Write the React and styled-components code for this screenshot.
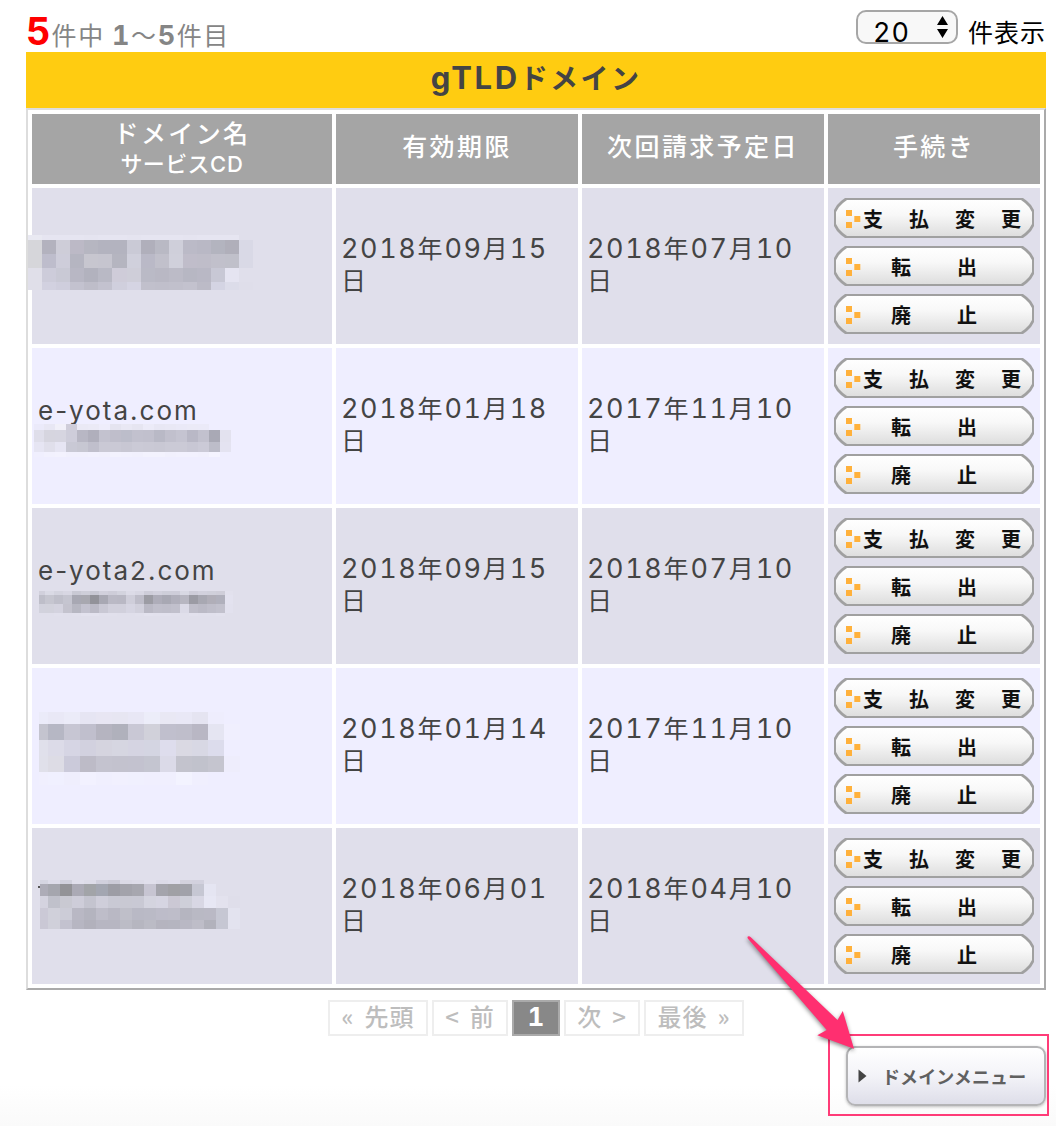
import React from "react";
import styled, { createGlobalStyle } from "styled-components";

const GlobalStyle = createGlobalStyle`
  * { box-sizing: border-box; }
  body {
    margin: 0;
    background: #fff;
    color: #444;
    font-family: "Noto Sans CJK JP", "Liberation Sans", sans-serif;
  }
`;

const Page = styled.div`
  position: relative;
  width: 1056px;
  height: 1126px;
  overflow: hidden;
  padding: 10px 10px 0 26px;
  background: linear-gradient(#fff 1085px, #fafafa 1126px);
`;

const TopBar = styled.div`
  display: flex;
  justify-content: space-between;
  width: 1020px;
  height: 42px;
`;

const Latin = styled.span`
  font-family: Inter, "Liberation Sans", sans-serif;
  font-feature-settings: "tnum" ${(p) => (p.$plain ? 0 : 1)};
  font-size: ${(p) => p.$size || 27}px;
  font-weight: ${(p) => p.$weight || 400};
  letter-spacing: ${(p) => p.$gap ?? 1.6}px;
  line-height: 1;
`;

const Count = styled.div`
  height: 42px;
  line-height: 42px;
  padding-top: 2px;
  font-size: 25px;
  letter-spacing: 1.6px;
  color: #858585;
  white-space: pre;
`;

const Total = styled(Latin)`
  color: #f00;
`;

const PerPage = styled.div`
  display: flex;
  align-items: flex-start;
  gap: 10px;
  font-size: 25px;
  letter-spacing: 1px;
  color: #000;
`;

const PerPageLabel = styled.span`
  height: 42px;
  line-height: 43px;
`;

const SelectBox = styled.div`
  display: flex;
  justify-content: space-between;
  width: 102px;
  height: 34px;
  padding: 4px 8px 0 15px;
  border: 2px solid #a6a6a6;
  border-radius: 10px;
  background: #f8f8f8;
`;

const SelectValue = styled(Latin)`
  line-height: 33px;
`;

const Title = styled.h1`
  width: 1020px;
  height: 56px;
  margin: 0;
  background: #ffcc11;
  font-size: 28px;
  font-weight: 700;
  letter-spacing: 2.4px;
  line-height: 51px;
  text-align: center;
`;

const Table = styled.table`
  width: 1020px;
  height: 882px;
  table-layout: fixed;
  border-collapse: separate;
  border-spacing: 4px;
  border: 2px solid #ddd;
  border-right-color: #aaa;
  border-bottom-color: #aaa;
`;

const HeadCell = styled.th`
  width: ${(p) => p.$width}px;
  height: 70px;
  padding: 0 0 ${(p) => (p.$double ? 7 : 9)}px;
  background: #a5a5a5;
  color: #fff;
  font-size: 25px;
  font-weight: 500;
  letter-spacing: 2.4px;
  line-height: 32px;
`;

const HeadNote = styled.div`
  font-size: 22px;
  letter-spacing: 0.4px;
  line-height: 28px;
`;

const Row = styled.tr`
  background: ${(p) => (p.$alt ? "#efeeff" : "#e0dfeb")};
`;

const Cell = styled.td`
  position: relative;
  height: 156px;
  padding: 0 6px 7px 5px;
  font-size: 25px;
  letter-spacing: 2px;
  line-height: 32px;
  vertical-align: middle;
`;

const DomainName = styled.div`
  height: 64px;
  padding: 2px 0 0 1px;
`;

const ActionCell = styled(Cell)`
  padding: 0 6px;
`;

const Actions = styled.div`
  display: flex;
  flex-direction: column;
  gap: 8px;
`;

const octagon =
  "polygon(0 12px, 3px 7px, 7px 3px, 11px 0, calc(100% - 11px) 0, calc(100% - 7px) 3px, calc(100% - 3px) 7px, 100% 12px, 100% calc(100% - 12px), calc(100% - 3px) calc(100% - 7px), calc(100% - 7px) calc(100% - 3px), calc(100% - 11px) 100%, 11px 100%, 7px calc(100% - 3px), 3px calc(100% - 7px), 0 calc(100% - 12px))";

const ActionButton = styled.button`
  position: relative;
  z-index: 0;
  display: flex;
  align-items: center;
  width: 200px;
  height: 40px;
  padding: 2px 0 0 12px;
  border: 0;
  background: #a0a0a0;
  clip-path: ${octagon};

  &::before {
    content: "";
    position: absolute;
    z-index: -1;
    inset: 2px;
    background: linear-gradient(#fff, #f8f8f8 40%, #dedede);
    clip-path: ${octagon};
  }

  svg {
    flex: none;
  }
`;

const ActionLabel = styled.span`
  width: 0;
  margin-left: ${(p) => (p.$wide ? 2 : 30)}px;
  color: #111;
  font-family: "Noto Sans CJK JP", sans-serif;
  font-size: 20px;
  font-weight: 700;
  letter-spacing: ${(p) => (p.$wide ? 26 : 46)}px;
  line-height: 36px;
  white-space: nowrap;
`;

const MosaicBox = styled.div`
  position: absolute;
  left: ${(p) => p.$x}px;
  top: ${(p) => p.$y}px;
`;

const MosaicRow = styled.div`
  display: flex;
  height: ${(p) => p.$height}px;
`;

const Tile = styled.i`
  flex: none;
  width: ${(p) => p.$width}px;
  background: #${(p) => p.$color};
`;

const Speck = styled.i`
  position: absolute;
  left: 6px;
  top: 58px;
  width: 2px;
  height: 2px;
  background: #555;
`;

const Pager = styled.nav`
  display: flex;
  justify-content: center;
  gap: 4px;
  width: 1020px;
  margin-top: 10px;
`;

const PageLink = styled.span`
  display: flex;
  align-items: center;
  justify-content: center;
  gap: 10px;
  width: ${(p) => p.$width}px;
  height: 36px;
  padding: 0 0 ${(p) => (p.$current ? 2 : 4)}px 0;
  border: 2px solid ${(p) => (p.$current ? "#aaa" : "#eee")};
  background: ${(p) => (p.$current ? "#888" : "#fff")};
  color: ${(p) => (p.$current ? "#fff" : "#bdbdbd")};
  font-size: 24px;
  font-weight: 500;
  letter-spacing: 1px;
  line-height: 30px;
`;

const Footer = styled.div`
  display: flex;
  justify-content: flex-end;
  width: 1020px;
  margin-top: 10px;
`;

const MenuButton = styled.button`
  display: flex;
  align-items: center;
  gap: 15px;
  width: 200px;
  height: 60px;
  padding: 0 0 0 10px;
  border: 2px solid #b4b4b6;
  border-radius: 9px;
  background: linear-gradient(#fff, #f3f3f8 50%, #dedee9);
  box-shadow: 0 1px 3px rgba(0, 0, 0, 0.25);
  color: #606060;
  font-family: "Noto Sans CJK JP", sans-serif;
  font-size: 18px;
  font-weight: 700;
  letter-spacing: 0.1px;
  white-space: nowrap;
`;

const Highlight = styled.div`
  position: absolute;
  left: 828px;
  top: 1034px;
  width: 221px;
  height: 82px;
  border: 2px solid #ff3c78;
`;

const Arrow = styled.svg`
  position: absolute;
  left: 738px;
  top: 926px;
  filter: drop-shadow(0 2px 2px rgba(0, 0, 0, 0.45));
`;

/* Each mosaic: origin inside the cell, column widths, then [height, colours] per row. */
const fill = (first, width, n, last) =>
  Array.from({ length: n }, (_, i) => (i === 0 ? first : i === n - 1 && last ? last : width));

const MOSAICS = [
  {
    x: -4, y: 47, widths: fill(14, 14.1, 16),
    rows: [
      [4.7, "e9e9f2 e6e5f1 e6e5f1 e6e5f1 e5e4f0 e6e5f1 e6e5f1 e5e4f0 e6e5f1 e6e5f1 e6e5f1 e5e4f0 e6e5f1 e6e5f1 e6e5f1 e0dfeb"],
      [14, "d6d6da b3b2be cecdd8 bcb9c6 b6b6c1 b3b3bf b3b3bf cacad6 b0afbb b9b9c4 cfcfda bbbac7 b9b8c5 b3b4bf b0afba d9d9e6"],
      [14, "d6d6da bebdcc cecdda b5b5c1 c7c6cf c6c5cf b5b5c0 d0d0dc bab9c7 c1c0cb d0d0db c0bdca bfbdc9 c1c0cb c0c0ca d9d9e6"],
      [14, "e0dfe9 cdccda c9c9d5 b8b7c4 b2b2be b9b9c5 cfccd9 cfced9 babac6 b9b8c4 bcbbc7 b7b7c3 b9b8c5 c8c8d5 e5e4f1 e0dfeb"],
      [8.3, "e0dfe9 d2d1e0 cfcedd c3c2cf bebdc9 c3c2cf d0cfdd d5d4e3 c1c0cc c0bfcb c1c0cc c3c2ce bcbbc7 d4d4e3 dcdce9 dfdeea"],
    ],
  },
  {
    x: 2, y: 76, widths: fill(10, 11, 18),
    rows: [
      [6, "ebeafa e8e7f4 f1f0f9 cfcdda eae9f5 ebeaf6 eeedfb e5e4f0 e9e8f4 e6e5f1 ecebf8 e8e7f4 e9e8f5 eae9f7 ebeaf7 ebeaf8 efeeff efeeff"],
      [11.5, "dfdeea d6d5df d6d5e0 cecdda b8b7c4 b0afbc c3c2cf bfbecb bcbdca c2c1ce c1c0cd b9b9c6 c1c0cd c5c4d1 b9b8c6 c2c1ce a9a9b5 e3e2ef"],
      [10.5, "e6e5f3 e0dfeb e6e5f3 c9c9d5 c7c7d2 c0bfcc cac9d5 cac9d5 c8c7d3 cbcad6 cac9d5 c9c8d4 cbcad6 cbcad6 c8c7d4 cbcad7 bdbdc9 e4e3f1"],
      [4.7, "f0effe f2f1fe f3f2fe f1f0fd f1f0fd f2f1fe f1f0fd f3f2fe f2f1fe f1f0fd f3f2fe f3f2fe f1f0fd f2f1fe f2f1fe f1f0fd f5f4ff efeeff"],
    ],
  },
  {
    x: 7, y: 83, widths: fill(6, 9, 22, 7.5),
    rows: [
      [3.5, "d1d0dc dadae5 d4d4df d8d7e3 c9c9d4 ceced9 c8c8d3 d1d0dc cecdd9 d3d3de dcdbe7 d8d7e3 cecdd9 d2d1dd ceced9 cecdd9 d8d8e3 cecdd9 d2d1dd d0d0db cfced9 e2e1ed"],
      [9, "bebec9 c6c6d0 bfbfca c5c5d0 a8a8b3 a8a8b0 929299 a8a8b3 bab9c5 b9b8c4 cfceda bebdc9 9c9ca4 aeadb9 a8a8b3 b0afbb b7b6c1 9b9ba4 a8a8b2 b0aeb8 b0b0bc e3e2ef"],
      [9, "d2d2dd d2d2dc d4d3df c4c3ce b7b7c2 c3c2cf bbbac6 c9c8d4 d1d0dc d1d0dc d6d5e2 d1d0dc bab9c5 c0bfcb bfbeca c1c0cc dbdae7 bfbeca bbbac6 bfbeca c2c1cd e2e1ee"],
      [3.3, "e0dfeb e0dfeb e1e0ec e0dfeb e1e0ec e3e2ee e3e2ee e1e0ec e1e0ec e0dfeb e0dfeb e1e0ec e3e2ee e2e1ed e2e1ed e1e0ec e0dfeb e2e1ed e1e0ec e1e0ec e2e1ed e0dfeb"],
    ],
  },
  {
    x: 7, y: 44, widths: fill(9, 16, 13),
    rows: [
      [12, "ebebf9 e9e8f6 ebebf8 e6e5f3 e8e6f3 e7e6f2 e8e7f5 ecedf9 e9e8f4 e9e8f6 e5e4f1 eeedfd efeeff"],
      [16, "c4c4cf b6b7c4 c7c6d3 c0bfcd b5b4c0 b0b1bc c9c8d5 d1d1da c0bfcd bfbecb b9b7c4 e5e5f2 f0effe"],
      [16, "e0e0eb dcdbe8 d6d5e4 d2d1df d5d4df d6d6e1 d5d4e2 d4d5e2 dedded dad9e3 d8d8e4 dcdcec efeeff"],
      [16, "e0e0ea dddce5 cbcada bdbbc7 c4c3cf c3c2ce c3c2cf c4c5d0 dbdae8 c3c3cd c1c2cc c5c5cf eeedfc"],
      [12.7, "f0effe f0f0ff efeefd f2f1ff f0effe f1f0fe f0f0fe f0effe f0effe f3f3ff f0effe efeeff efeeff"],
    ],
  },
  {
    x: 8, y: 52, widths: fill(8, 12, 17),
    rows: [
      [4, "d5d5e1 dddce9 d1d1dd e0dfeb dddce8 d1d0dd cccbd7 dbdae6 dddce8 e0dfeb dcdbe8 deddeb d3d2de d2d1de e0dfeb e0dfeb e0dfeb"],
      [12, "adacb7 a5a6ae 939397 abaab5 a2a4a8 a3a6b1 9d9da5 a3a3ab a7a7af c7c5d2 a4a4ac a0a0a5 a1a2aa c6c7d3 e5e5f2 e0dfeb e0dfeb"],
      [12, "d4d3df c0c1cb c9c9d2 cecdd9 c4c4cf cfceda c9c9d4 c9c9d3 c9c9d4 d4d4df d6d5e2 cbc8d4 cecfd9 d8d7e4 e7e7f4 e3e2ee dfdeea"],
      [12, "cbc9d6 d0d0da ccccd7 b9b8c4 b4b4bf bebdc9 b9b8c4 bfbfc9 b9b9c5 babac6 bdbcc9 bebdc9 b5b5c0 b9b9c4 bab9c5 c6c7d3 e3e3ef"],
      [9, "cac8d5 d0d0da c3c2cf b7b6c2 b2b1bc b7b6c2 b7b6c2 bcbcc6 b6b6c0 bbbbc5 b5b4bf b5b5c0 b9b8c4 bebdc8 b2b2bc c6c7d3 e3e3ef"],
    ],
  },
];

const ROWS = [
  { name: "", expires: ["2018", "09", "15"], billing: ["2018", "07", "10"] },
  { name: "e-yota.com", expires: ["2018", "01", "18"], billing: ["2017", "11", "10"] },
  { name: "e-yota2.com", expires: ["2018", "09", "15"], billing: ["2018", "07", "10"] },
  { name: "", expires: ["2018", "01", "14"], billing: ["2017", "11", "10"] },
  { name: "", expires: ["2018", "06", "01"], billing: ["2018", "04", "10"], speck: true },
];

const ACTIONS = ["支払変更", "転出", "廃止"];

function Mosaic({ data }) {
  return (
    <MosaicBox $x={data.x} $y={data.y}>
      {data.rows.map(([height, colors], r) => (
        <MosaicRow key={r} $height={height}>
          {colors.split(" ").map((c, i) => (
            <Tile key={i} $width={data.widths[i]} $color={c} />
          ))}
        </MosaicRow>
      ))}
    </MosaicBox>
  );
}

function DateText({ value: [y, m, d] }) {
  return (
    <>
      <Latin>{y}</Latin>年<Latin>{m}</Latin>月<Latin>{d}</Latin>日
    </>
  );
}

function Dots() {
  return (
    <svg width="15" height="18" viewBox="0 0 15 18" fill="#ffb13b">
      <rect x="0" y="0" width="6" height="6" />
      <rect x="8.3" y="6" width="6" height="6" />
      <rect x="0" y="12" width="6" height="6" />
    </svg>
  );
}

export default function App() {
  return (
    <Page>
      <GlobalStyle />
      <TopBar>
        <Count>
          <Total $size={38} $weight={700} $gap={1}>5</Total>
          件中 <Latin $weight={700}>1</Latin>～<Latin $weight={700}>5</Latin>件目
        </Count>
        <PerPage>
          <SelectBox>
            <SelectValue $gap={1}>20</SelectValue>
            <svg width="11" height="22" viewBox="0 0 11 22">
              <path d="M5.5 0 11 9H0ZM5.5 22 0 13h11Z" fill="#000" />
            </svg>
          </SelectBox>
          <PerPageLabel>件表示</PerPageLabel>
        </PerPage>
      </TopBar>
      <Title>
        <Latin $size={31} $weight={700} $gap={2.6}>gTLD</Latin>ドメイン
      </Title>
      <Table>
        <thead>
          <tr>
            <HeadCell $width={300} $double>
              ドメイン名
              <HeadNote>
                サービス<Latin $size={22} $gap={0.8} $weight={500}>CD</Latin>
              </HeadNote>
            </HeadCell>
            <HeadCell $width={242}>有効期限</HeadCell>
            <HeadCell $width={242}>次回請求予定日</HeadCell>
            <HeadCell $width={212}>手続き</HeadCell>
          </tr>
        </thead>
        <tbody>
          {ROWS.map((row, i) => (
            <Row key={i} $alt={i % 2 === 1}>
              <Cell>
                <DomainName>
                  <Latin $size={26} $gap={2} $plain>{row.name}</Latin>
                </DomainName>
                <Mosaic data={MOSAICS[i]} />
                {row.speck && <Speck />}
              </Cell>
              <Cell><DateText value={row.expires} /></Cell>
              <Cell><DateText value={row.billing} /></Cell>
              <ActionCell>
                <Actions>
                  {ACTIONS.map((label) => (
                    <ActionButton key={label}>
                      <Dots />
                      <ActionLabel $wide={label.length === 4}>{label}</ActionLabel>
                    </ActionButton>
                  ))}
                </Actions>
              </ActionCell>
            </Row>
          ))}
        </tbody>
      </Table>
      <Pager>
        <PageLink $width={100}><span>«</span><span>先頭</span></PageLink>
        <PageLink $width={76}><span>&lt;</span><span>前</span></PageLink>
        <PageLink $width={48} $current><Latin $size={26} $weight={700} $gap={0}>1</Latin></PageLink>
        <PageLink $width={76}><span>次</span><span>&gt;</span></PageLink>
        <PageLink $width={100}><span>最後</span><span>»</span></PageLink>
      </Pager>
      <Footer>
        <MenuButton>
          <svg width="9" height="14" viewBox="0 0 9 14">
            <path d="M0.5 0.5 8.5 7 0.5 13.5Z" fill="#444" />
          </svg>
          ドメインメニュー
        </MenuButton>
      </Footer>
      <Highlight />
      <Arrow width="130" height="135" viewBox="738 926 130 135">
        <path
          d="M747.8 938.6Q746.8 936.2 748.8 936.2Q749.8 936.2 750.8 937.2L837.5 1020 842.8 1011 854 1048.7 817.3 1035.3 826.7 1030Z"
          fill="#ff2f70"
        />
      </Arrow>
    </Page>
  );
}
